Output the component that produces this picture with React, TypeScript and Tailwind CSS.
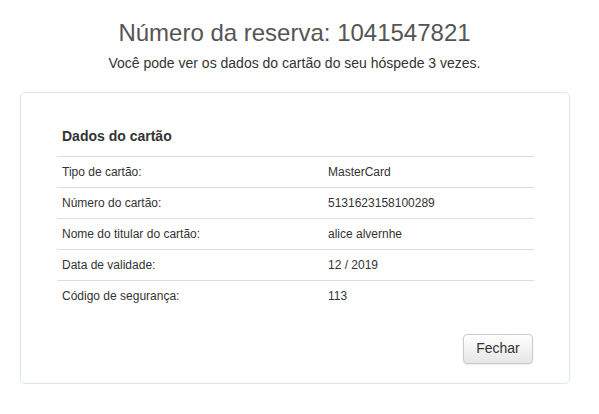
const rows = [
  ['Tipo de cartão:', 'MasterCard'],
  ['Número do cartão:', '5131623158100289'],
  ['Nome do titular do cartão:', 'alice alvernhe'],
  ['Data de validade:', '12 / 2019'],
  ['Código de segurança:', '113'],
];

export default function App() {
  return (
    <div className="min-h-screen bg-white font-['Liberation_Sans',Arial,sans-serif] text-[#333]">
      <div className="w-[589px] px-5 pt-[17px]">
        <h1 className="text-center text-[24px] leading-[32px] text-[#555]">
          Número da reserva: 1041547821
        </h1>
        <p className="mt-[4px] text-center text-[14px] leading-[20px]">
          Você pode ver os dados do cartão do seu hóspede 3 vezes.
        </p>

        <div className="mt-[19px] h-[292px] w-[550px] rounded-[5px] border border-[#dbe6ee] px-[36px] pt-[33px]">
          <h2 className="px-[5px] text-[14px] font-bold leading-[20px] text-[#333]">Dados do cartão</h2>
          <table className="mt-[10px] w-[477px] border-collapse text-[12px]">
            <tbody>
              {rows.map(([label, value]) => (
                <tr key={label} className="border-t border-[#ddd]">
                  <td className="h-[31px] w-[266px] px-[5px] align-middle">{label}</td>
                  <td className="h-[31px] px-[5px] align-middle">{value}</td>
                </tr>
              ))}
            </tbody>
          </table>
          <div className="mt-[22px] flex justify-end">
            <button className="h-[30px] w-[70px] rounded-[4px] border border-[#ccc] bg-gradient-to-b from-white to-[#e6e6e6] text-[14px] text-[#333] shadow-[0_1px_2px_rgba(0,0,0,0.08)]">
              Fechar
            </button>
          </div>
        </div>
      </div>
    </div>
  );
}
